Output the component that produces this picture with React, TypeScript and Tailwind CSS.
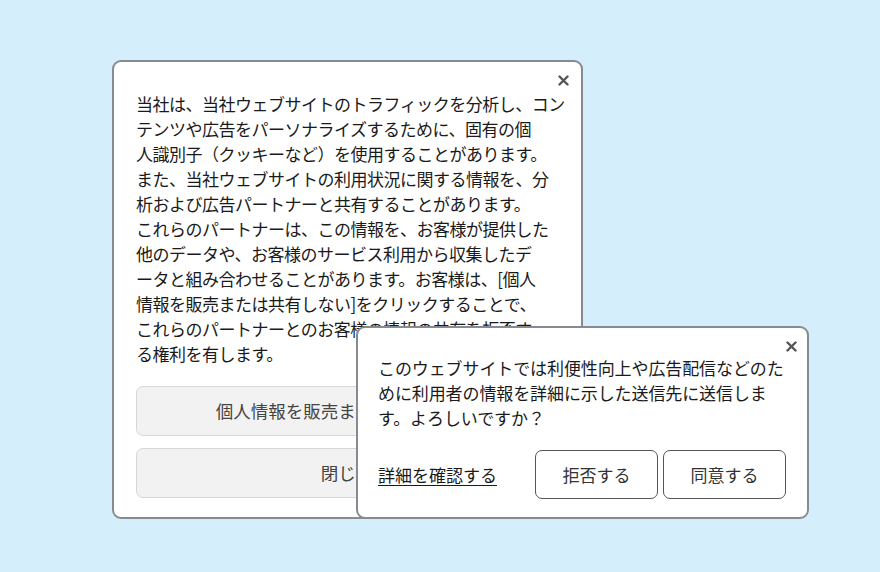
import React from "react";

const jp = { fontFamily: '"Noto Sans CJK JP", "Noto Sans", sans-serif' };

function CloseX() {
  return (
    <svg width="11" height="11" viewBox="0 0 11 11" aria-hidden="true">
      <path d="M1.5 1.5 L9.5 9.5 M9.5 1.5 L1.5 9.5" stroke="#555" strokeWidth="2.4" strokeLinecap="round" />
    </svg>
  );
}

const privacyLines = [
  "当社は、当社ウェブサイトのトラフィックを分析し、コン",
  "テンツや広告をパーソナライズするために、固有の個",
  "人識別子（クッキーなど）を使用することがあります。",
  "また、当社ウェブサイトの利用状況に関する情報を、分",
  "析および広告パートナーと共有することがあります。",
  "これらのパートナーは、この情報を、お客様が提供した",
  "他のデータや、お客様のサービス利用から収集したデ",
  "ータと組み合わせることがあります。お客様は、[個人",
  "情報を販売または共有しない]をクリックすることで、",
  "これらのパートナーとのお客様の情報の共有を拒否す",
  "る権利を有します。",
];

const consentLines = [
  "このウェブサイトでは利便性向上や広告配信などのた",
  "めに利用者の情報を詳細に示した送信先に送信しま",
  "す。よろしいですか？",
];

export default function App() {
  return (
    <div className="relative w-[880px] h-[572px] bg-[#d5eefb] overflow-hidden" style={jp}>
      {/* privacy notice window */}
      <div className="absolute left-[112px] top-[60px] w-[471px] h-[459px] bg-white border-2 border-[#868b91] rounded-[9px] px-[22px] pt-[29px]">
        <button className="absolute top-[10px] right-[10px] w-[16px] h-[16px] flex items-center justify-center">
          <CloseX />
        </button>
        <div className="text-[17px] leading-[25px] tracking-[-0.5px] text-[#1a1a1a]">
          {privacyLines.map((l) => (
            <div key={l} className="whitespace-nowrap">{l}</div>
          ))}
        </div>
        <div className="mt-[20px] flex flex-col gap-[12px]">
          <button className="h-[50px] w-[422px] rounded-[7px] bg-[#f2f2f2] border border-[#d7d7d7] text-[17.5px] text-[#444]">
            個人情報を販売または共有しない
          </button>
          <button className="h-[50px] w-[422px] rounded-[7px] bg-[#f2f2f2] border border-[#d7d7d7] text-[17.5px] text-[#444]">
            閉じる
          </button>
        </div>
      </div>

      {/* consent window */}
      <div className="absolute left-[356px] top-[326px] w-[453px] h-[193px] bg-white border-2 border-[#868b91] rounded-[9px] pl-[20px] pr-[21px] pt-[27px]">
        <button className="absolute top-[10px] right-[8px] w-[16px] h-[16px] flex items-center justify-center">
          <CloseX />
        </button>
        <div className="text-[17px] leading-[25px] tracking-[-0.1px] text-[#1a1a1a]">
          {consentLines.map((l) => (
            <div key={l} className="whitespace-nowrap">{l}</div>
          ))}
        </div>
        <div className="mt-[20px] flex items-center">
          <a className="text-[17px] text-[#1a1a1a] underline underline-offset-[3px] decoration-1">詳細を確認する</a>
          <div className="ml-auto flex gap-[5px]">
            <button className="w-[123px] h-[49px] rounded-[7px] border border-[#555] bg-white text-[17px] text-[#333]">
              拒否する
            </button>
            <button className="w-[123px] h-[49px] rounded-[7px] border border-[#555] bg-white text-[17px] text-[#333]">
              同意する
            </button>
          </div>
        </div>
      </div>
    </div>
  );
}
